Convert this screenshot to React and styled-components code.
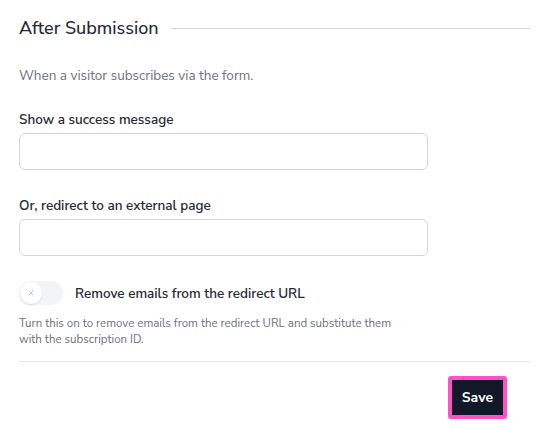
import React, { useState } from "react"
import styled, { createGlobalStyle } from "styled-components"

const GlobalStyle = createGlobalStyle`
  body {
    margin: 0;
    background: #ffffff;
    font-family: "Nunito Sans", Lato, "Open Sans", sans-serif;
  }
`

const Panel = styled.div`
  width: 553px;
  padding: 16px 23px 0 19px;
  box-sizing: border-box;
`

const Header = styled.div`
  display: flex;
  align-items: center;
  gap: 12px;

  h2 {
    margin: 0;
    font-size: 18px;
    font-weight: 500;
    color: #1f2937;
    white-space: nowrap;
  }

  &::after {
    content: "";
    flex: 1;
    height: 1px;
    background: #d1d5db;
  }
`

const Intro = styled.p`
  margin: 26px 0 0;
  font-size: 13.5px;
  color: #6b7280;
`

const Field = styled.div`
  margin-top: ${(p) => p.$top}px;
  display: flex;
  flex-direction: column;
  gap: 4px;
`

const Label = styled.label`
  font-size: 13.5px;
  font-weight: 600;
  color: #1f2937;
`

const Input = styled.input`
  width: 409px;
  height: 37px;
  box-sizing: border-box;
  border: 1px solid #d1d5db;
  border-radius: 6px;
  padding: 0 10px;
  font: inherit;
  font-size: 13px;
  outline: none;
`

const ToggleRow = styled.div`
  margin-top: 25px;
  display: flex;
  align-items: center;
  gap: 12px;
`

const Track = styled.button`
  position: relative;
  width: 44px;
  height: 24px;
  border: none;
  border-radius: 12px;
  background: ${(p) => (p.$on ? "#111827" : "#f3f4f6")};
  padding: 0;
  cursor: pointer;
`

const Knob = styled.span`
  position: absolute;
  top: 1px;
  left: ${(p) => (p.$on ? "21px" : "1px")};
  width: 22px;
  height: 22px;
  border-radius: 50%;
  background: #ffffff;
  box-shadow: 0 1px 2px rgba(0, 0, 0, 0.12);
  display: flex;
  align-items: center;
  justify-content: center;
`

const ToggleLabel = styled.span`
  font-size: 13.5px;
  font-weight: 600;
  color: #1f2937;
`

const Help = styled.p`
  margin: 10px 0 0;
  width: 388px;
  font-size: 11.5px;
  line-height: 16px;
  color: #6b7280;
`

const Divider = styled.hr`
  margin: 14px 0 0;
  border: none;
  border-top: 1px solid #e5e7eb;
`

const Footer = styled.div`
  display: flex;
  justify-content: flex-end;
  padding: 14px 23px 0 0;
`

const SaveButton = styled.button`
  background: #111827;
  color: #ffffff;
  border: 4px solid #ff52c6;
  border-radius: 3px;
  padding: 0 10px;
  height: 43px;
  font: inherit;
  font-size: 14px;
  font-weight: 700;
  cursor: pointer;
`

export default function App() {
  const [on, setOn] = useState(false)

  return (
    <Panel>
      <GlobalStyle />
      <Header>
        <h2>After Submission</h2>
      </Header>
      <Intro>When a visitor subscribes via the form.</Intro>

      <Field $top={25}>
        <Label htmlFor="success">Show a success message</Label>
        <Input id="success" type="text" />
      </Field>

      <Field $top={26}>
        <Label htmlFor="redirect">Or, redirect to an external page</Label>
        <Input id="redirect" type="text" />
      </Field>

      <ToggleRow>
        <Track $on={on} onClick={() => setOn(!on)} aria-label="toggle">
          <Knob $on={on}>
            <svg width="8" height="8" viewBox="0 0 8 8">
              <path d="M1.5 1.5l5 5M6.5 1.5l-5 5" stroke="#c4c8ce" strokeWidth="1" fill="none" />
            </svg>
          </Knob>
        </Track>
        <ToggleLabel>Remove emails from the redirect URL</ToggleLabel>
      </ToggleRow>
      <Help>
        Turn this on to remove emails from the redirect URL and substitute them
        with the subscription ID.
      </Help>

      <Divider />
      <Footer>
        <SaveButton>Save</SaveButton>
      </Footer>
    </Panel>
  )
}
